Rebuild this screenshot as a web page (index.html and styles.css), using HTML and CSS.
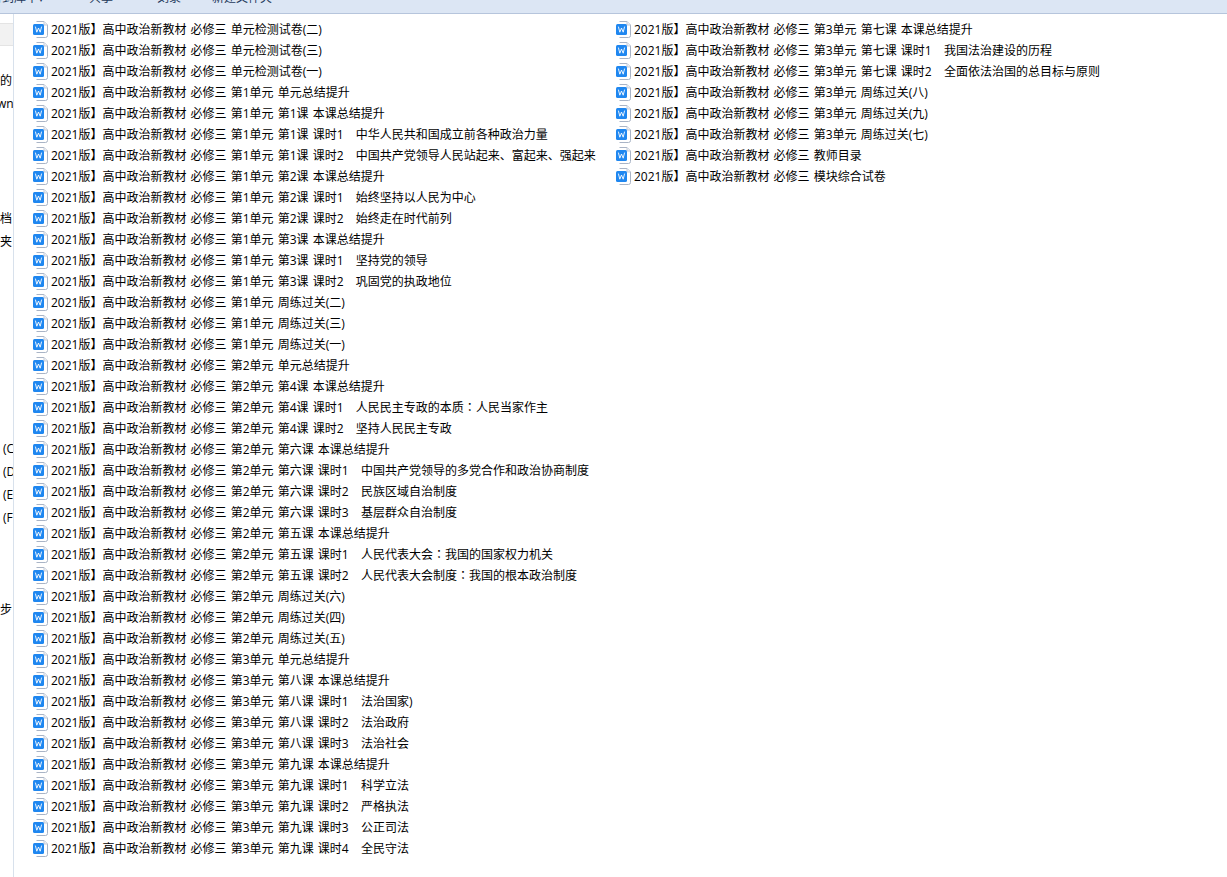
FILE: index.html
```html
<!DOCTYPE html>
<html lang="zh-CN">
<head>
<meta charset="utf-8">
<title>文件列表</title>
<link rel="stylesheet" href="styles.css">
</head>
<body>
<svg class="defs" width="0" height="0" aria-hidden="true">
  <symbol id="doc" viewBox="0 0 16 17">
    <path d="M3.5 .5H11L14.5 4V14.5Q14.5 16.5 12.5 16.5H3.5" fill="#fff" stroke="#a9b4c6"/>
    <path d="M11 .5V4H14.5" fill="#eef1f6" stroke="#c3cbd8"/>
    <rect x="0" y="3" width="11" height="11" rx="1.5" fill="#1f87f0"/>
    <path d="M2.4 5.6L3.8 11.2L5.5 7L7.2 11.2L8.6 5.6" fill="none" stroke="#fff" stroke-width=".9"/>
  </symbol>
</svg>
<header class="toolbar">
  <span class="tool tool-lib">含到库中▾</span>
  <span class="tool tool-share">共享</span>
  <span class="tool tool-burn">刻录</span>
  <span class="tool tool-new">新建文件夹</span>
</header>
<div class="main">
  <aside class="side">
    <div class="side-btn"></div>
    <div class="side-row"></div>
    <div class="side-row">的</div>
    <div class="side-row clip">wn</div>
    <div class="side-row"></div><div class="side-row"></div><div class="side-row"></div><div class="side-row"></div>
    <div class="side-row">档</div>
    <div class="side-row">夹</div>
    <div class="side-row"></div><div class="side-row"></div><div class="side-row"></div><div class="side-row"></div><div class="side-row"></div><div class="side-row"></div><div class="side-row"></div><div class="side-row"></div>
    <div class="side-row nudge">(C</div>
    <div class="side-row nudge">(D</div>
    <div class="side-row nudge">(E</div>
    <div class="side-row nudge">(F</div>
    <div class="side-row"></div><div class="side-row"></div><div class="side-row"></div>
    <div class="side-row">步</div>
  </aside>
  <section class="files">
    <ul class="col">
      <li><svg class="ico"><use href="#doc"/></svg>2021版】高中政治新教材 必修三 单元检测试卷(二)</li>
      <li><svg class="ico"><use href="#doc"/></svg>2021版】高中政治新教材 必修三 单元检测试卷(三)</li>
      <li><svg class="ico"><use href="#doc"/></svg>2021版】高中政治新教材 必修三 单元检测试卷(一)</li>
      <li><svg class="ico"><use href="#doc"/></svg>2021版】高中政治新教材 必修三 第1单元 单元总结提升</li>
      <li><svg class="ico"><use href="#doc"/></svg>2021版】高中政治新教材 必修三 第1单元 第1课 本课总结提升</li>
      <li><svg class="ico"><use href="#doc"/></svg>2021版】高中政治新教材 必修三 第1单元 第1课 课时1   中华人民共和国成立前各种政治力量</li>
      <li><svg class="ico"><use href="#doc"/></svg>2021版】高中政治新教材 必修三 第1单元 第1课 课时2   中国共产党领导人民站起来、富起来、强起来</li>
      <li><svg class="ico"><use href="#doc"/></svg>2021版】高中政治新教材 必修三 第1单元 第2课 本课总结提升</li>
      <li><svg class="ico"><use href="#doc"/></svg>2021版】高中政治新教材 必修三 第1单元 第2课 课时1   始终坚持以人民为中心</li>
      <li><svg class="ico"><use href="#doc"/></svg>2021版】高中政治新教材 必修三 第1单元 第2课 课时2   始终走在时代前列</li>
      <li><svg class="ico"><use href="#doc"/></svg>2021版】高中政治新教材 必修三 第1单元 第3课 本课总结提升</li>
      <li><svg class="ico"><use href="#doc"/></svg>2021版】高中政治新教材 必修三 第1单元 第3课 课时1   坚持党的领导</li>
      <li><svg class="ico"><use href="#doc"/></svg>2021版】高中政治新教材 必修三 第1单元 第3课 课时2   巩固党的执政地位</li>
      <li><svg class="ico"><use href="#doc"/></svg>2021版】高中政治新教材 必修三 第1单元 周练过关(二)</li>
      <li><svg class="ico"><use href="#doc"/></svg>2021版】高中政治新教材 必修三 第1单元 周练过关(三)</li>
      <li><svg class="ico"><use href="#doc"/></svg>2021版】高中政治新教材 必修三 第1单元 周练过关(一)</li>
      <li><svg class="ico"><use href="#doc"/></svg>2021版】高中政治新教材 必修三 第2单元 单元总结提升</li>
      <li><svg class="ico"><use href="#doc"/></svg>2021版】高中政治新教材 必修三 第2单元 第4课 本课总结提升</li>
      <li><svg class="ico"><use href="#doc"/></svg><span>2021版】高中政治新教材 必修三 第2单元 第4课 课时1   人民民主专政的本质<span class="tc" lang="zh-TW">：</span>人民当家作主</span></li>
      <li><svg class="ico"><use href="#doc"/></svg>2021版】高中政治新教材 必修三 第2单元 第4课 课时2   坚持人民民主专政</li>
      <li><svg class="ico"><use href="#doc"/></svg>2021版】高中政治新教材 必修三 第2单元 第六课 本课总结提升</li>
      <li><svg class="ico"><use href="#doc"/></svg>2021版】高中政治新教材 必修三 第2单元 第六课 课时1   中国共产党领导的多党合作和政治协商制度</li>
      <li><svg class="ico"><use href="#doc"/></svg>2021版】高中政治新教材 必修三 第2单元 第六课 课时2   民族区域自治制度</li>
      <li><svg class="ico"><use href="#doc"/></svg>2021版】高中政治新教材 必修三 第2单元 第六课 课时3   基层群众自治制度</li>
      <li><svg class="ico"><use href="#doc"/></svg>2021版】高中政治新教材 必修三 第2单元 第五课 本课总结提升</li>
      <li><svg class="ico"><use href="#doc"/></svg><span>2021版】高中政治新教材 必修三 第2单元 第五课 课时1   人民代表大会<span class="tc" lang="zh-TW">：</span>我国的国家权力机关</span></li>
      <li><svg class="ico"><use href="#doc"/></svg><span>2021版】高中政治新教材 必修三 第2单元 第五课 课时2   人民代表大会制度<span class="tc" lang="zh-TW">：</span>我国的根本政治制度</span></li>
      <li><svg class="ico"><use href="#doc"/></svg>2021版】高中政治新教材 必修三 第2单元 周练过关(六)</li>
      <li><svg class="ico"><use href="#doc"/></svg>2021版】高中政治新教材 必修三 第2单元 周练过关(四)</li>
      <li><svg class="ico"><use href="#doc"/></svg>2021版】高中政治新教材 必修三 第2单元 周练过关(五)</li>
      <li><svg class="ico"><use href="#doc"/></svg>2021版】高中政治新教材 必修三 第3单元 单元总结提升</li>
      <li><svg class="ico"><use href="#doc"/></svg>2021版】高中政治新教材 必修三 第3单元 第八课 本课总结提升</li>
      <li><svg class="ico"><use href="#doc"/></svg>2021版】高中政治新教材 必修三 第3单元 第八课 课时1   法治国家)</li>
      <li><svg class="ico"><use href="#doc"/></svg>2021版】高中政治新教材 必修三 第3单元 第八课 课时2   法治政府</li>
      <li><svg class="ico"><use href="#doc"/></svg>2021版】高中政治新教材 必修三 第3单元 第八课 课时3   法治社会</li>
      <li><svg class="ico"><use href="#doc"/></svg>2021版】高中政治新教材 必修三 第3单元 第九课 本课总结提升</li>
      <li><svg class="ico"><use href="#doc"/></svg>2021版】高中政治新教材 必修三 第3单元 第九课 课时1   科学立法</li>
      <li><svg class="ico"><use href="#doc"/></svg>2021版】高中政治新教材 必修三 第3单元 第九课 课时2   严格执法</li>
      <li><svg class="ico"><use href="#doc"/></svg>2021版】高中政治新教材 必修三 第3单元 第九课 课时3   公正司法</li>
      <li><svg class="ico"><use href="#doc"/></svg>2021版】高中政治新教材 必修三 第3单元 第九课 课时4   全民守法</li>
    </ul>
    <ul class="col">
      <li><svg class="ico"><use href="#doc"/></svg>2021版】高中政治新教材 必修三 第3单元 第七课 本课总结提升</li>
      <li><svg class="ico"><use href="#doc"/></svg>2021版】高中政治新教材 必修三 第3单元 第七课 课时1   我国法治建设的历程</li>
      <li><svg class="ico"><use href="#doc"/></svg>2021版】高中政治新教材 必修三 第3单元 第七课 课时2   全面依法治国的总目标与原则</li>
      <li><svg class="ico"><use href="#doc"/></svg>2021版】高中政治新教材 必修三 第3单元 周练过关(八)</li>
      <li><svg class="ico"><use href="#doc"/></svg>2021版】高中政治新教材 必修三 第3单元 周练过关(九)</li>
      <li><svg class="ico"><use href="#doc"/></svg>2021版】高中政治新教材 必修三 第3单元 周练过关(七)</li>
      <li><svg class="ico"><use href="#doc"/></svg>2021版】高中政治新教材 必修三 教师目录</li>
      <li><svg class="ico"><use href="#doc"/></svg>2021版】高中政治新教材 必修三 模块综合试卷</li>
    </ul>
  </section>
</div>
</body>
</html>
```
FILE: styles.css
```css
* { box-sizing: border-box; }
html, body { height: 100%; }
body {
  margin: 0;
  height: 877px;
  overflow: hidden;
  background: #fff;
  color: #000;
  font: 12px/16px "Open Sans", "Noto Sans CJK SC", sans-serif;
  display: flex;
  flex-direction: column;
}
.defs { position: absolute; }
.toolbar {
  flex: none;
  height: 14px;
  background: #dce6f4;
  border-bottom: 1px solid #b6c5dc;
  display: flex;
  align-items: flex-end;
  overflow: hidden;
  color: #1e395b;
  padding-bottom: 7px;
  white-space: nowrap;
}
.tool { flex: none; }
.tool-lib { width: 99px; margin-left: -10px; }
.tool-share { width: 68px; }
.tool-burn { width: 55px; }
.main { flex: 1; display: flex; min-height: 0; }
.side {
  flex: none;
  width: 14px;
  border-right: 1px solid #d8e1ec;
  overflow: hidden;
  padding-top: 9px;
  white-space: nowrap;
}
.side-btn {
  height: 23px;
  background: #f2f2f2;
  border-top: 1px solid #e4e4e4;
  border-bottom: 1px solid #e4e4e4;
}
.side-row { height: 23px; line-height: 23px; }
.clip { margin-left: -3px; }
.nudge { padding-left: 3px; }
.files {
  flex: 1;
  display: flex;
  padding-top: 5px;
  padding-left: 19px;
}
.col {
  list-style: none;
  margin: 0;
  padding: 0;
  width: 583px;
  flex: none;
}
.col li {
  height: 21px;
  line-height: 21px;
  display: flex;
  align-items: center;
  white-space: pre;
  word-spacing: 1px;
}
.tc { font-family: "Open Sans", "Noto Sans CJK TC", sans-serif; line-height: 0; }
.ico {
  width: 16px;
  height: 17px;
  margin-right: 2px;
  flex: none;
}
```
